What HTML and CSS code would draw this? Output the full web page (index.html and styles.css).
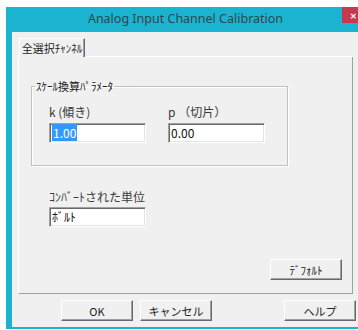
FILE: index.html
```html
<!DOCTYPE html>
<html lang="ja">
<head>
    <meta charset="UTF-8">
    <title>Analog Input Channel Calibration</title>
    <link rel="stylesheet" href="styles.css">
</head>
<body>
    <div class="window">
        <div class="titlebar">
            <span class="title">Analog Input Channel Calibration</span>
            <span class="close">✕</span>
        </div>
        <div class="client">
            <div class="tabrow">
                <div class="tab">全選択ﾁｬﾝﾈﾙ</div>
                <div class="tabfill"></div>
            </div>
            <div class="panel">
                <fieldset class="group">
                    <legend>ｽｹｰﾙ換算ﾊﾟﾗﾒｰﾀ</legend>
                    <div class="params">
                        <div class="param">
                            <div class="label">k (傾き)</div>
                            <div class="field"><span class="sel">1.00</span></div>
                        </div>
                        <div class="param">
                            <div class="label">p （切片）</div>
                            <div class="field">0.00</div>
                        </div>
                    </div>
                </fieldset>
                <div class="unit">
                    <div class="label">ｺﾝﾊﾞｰﾄされた単位</div>
                    <div class="field">ﾎﾞﾙﾄ</div>
                </div>
                <div class="panel-foot">
                    <button class="btn">ﾃﾞﾌｫﾙﾄ</button>
                </div>
            </div>
            <div class="buttons">
                <button class="btn">OK</button>
                <button class="btn">キャンセル</button>
                <button class="btn help">ヘルプ</button>
            </div>
        </div>
    </div>
</body>
</html>
```

FILE: styles.css
```css
body {
    margin: 0;
    background: #fff;
    overflow: hidden;
    font-family: "Noto Sans CJK JP", "Noto Sans", sans-serif;
    font-size: 12px;
    color: #333;
}
.window {
    margin: 7px 0 0 6px;
    width: 359px;
    background: #1ab4d1;
    padding: 0 6px 2px 6px;
    box-sizing: border-box;
}
.titlebar {
    position: relative;
    height: 25px;
    display: flex;
    justify-content: center;
    align-items: center;
}
.title {
    font-family: "Noto Sans", sans-serif;
    font-size: 12.5px;
    color: #33464b;
    padding-bottom: 2px;
}
.close {
    position: absolute;
    top: 0;
    right: -5px;
    width: 22px;
    height: 16px;
    background: #c7394f;
    color: #fff;
    font-size: 8px;
    font-weight: bold;
    display: flex;
    align-items: center;
    justify-content: center;
}
.client {
    background: #f0f0f0;
    height: 295px;
    padding: 6px 6px 0 6px;
    box-sizing: border-box;
    display: flex;
    flex-direction: column;
}
.tabrow {
    display: flex;
    height: 19px;
}
.tab {
    margin-left: 1px;
    width: 64px;
    border-left: 1px solid #fff;
    border-top: 1px solid #fff;
    border-right: 1px solid #696969;
    box-shadow: inset -1px 0 #a0a0a0;
    display: flex;
    align-items: center;
    justify-content: center;
    font-size: 11px;
    color: #222;
}
.tabfill {
    flex: 1;
    border-bottom: 1px solid #fff;
}
.panel {
    height: 237px;
    box-sizing: border-box;
    border-left: 1px solid #fff;
    border-right: 1px solid #a0a0a0;
    border-bottom: 1px solid #a0a0a0;
    display: flex;
    flex-direction: column;
}
.group {
    margin: 22px 0 0 12px;
    width: 257px;
    box-sizing: border-box;
    padding: 0 0 22px 0;
    border: 1px solid #c0c0c0;
    box-shadow: inset 1px 1px #fff, 1px 1px #fff;
}
.group legend {
    margin-left: 3px;
    padding: 0 1px;
    font-size: 11px;
    line-height: 14px;
    color: #222;
}
.params {
    display: flex;
    gap: 22px;
    margin: 12px 0 0 17px;
}
.label {
    line-height: 14px;
    color: #3a3a3a;
}
.field {
    width: 97px;
    height: 20px;
    box-sizing: border-box;
    margin-top: 4px;
    background: #fff;
    border: 1px solid;
    border-color: #a0a0a0 #fff #fff #a0a0a0;
    box-shadow: inset 1px 1px #696969, inset -1px -1px #e3e3e3;
    padding: 0 2px;
    line-height: 18px;
    color: #111;
}
.sel {
    background: #3399ff;
    color: #fff;
    padding: 0 1px;
}
.unit {
    margin: 24px 0 0 30px;
}
.unit .field {
    margin-top: 3px;
}
.panel-foot {
    display: flex;
    justify-content: flex-end;
    margin: 32px 10px 0 0;
}
.btn {
    width: 72px;
    height: 21px;
    margin: 0;
    padding: 0;
    font-family: "Noto Sans CJK JP", "Noto Sans", sans-serif;
    font-size: 11px;
    color: #222;
    background: #f0f0f0;
    border: 1px solid;
    border-color: #fff #696969 #696969 #fff;
    box-shadow: inset -1px -1px #a0a0a0;
}
.buttons {
    display: flex;
    gap: 7px;
    margin-top: 6px;
    padding-left: 43px;
}
.help {
    margin-left: auto;
    margin-right: -3px;
}
```
